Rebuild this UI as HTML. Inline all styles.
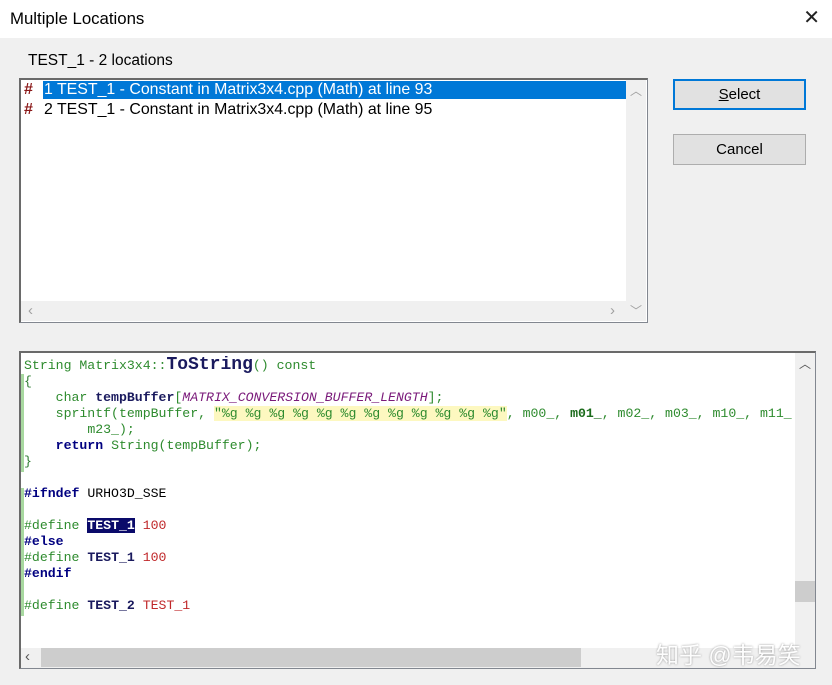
<!DOCTYPE html>
<html><head><meta charset="utf-8"><style>
*{margin:0;padding:0;box-sizing:border-box}
body{width:832px;height:685px;background:#f0f0f0;position:relative;overflow:hidden;font-family:"Liberation Sans","Noto Sans CJK SC",sans-serif;color:#000}
.abs{position:absolute}
.title{left:0;top:0;width:832px;height:38px;background:#fff;font-size:16.8px;line-height:38px;padding-left:10px}
.x{right:12px;top:8px;font-size:20px;line-height:20px;color:#222}
.btn{background:#e1e1e1;border:1px solid #adadad;font-size:15px;text-align:center;line-height:29px}
.mono{font-family:"Liberation Mono",monospace;font-size:13.2px;white-space:pre;line-height:16px}
.g{color:#2e8b2e}.b{color:#1a1a5e;font-weight:bold}.k{color:#000080;font-weight:bold}.p{color:#7a1a7a;font-style:italic}.r{color:#c0282a}.gr{color:#2e7d32}
</style></head><body>
<div class="abs title">Multiple Locations</div>
<div class="abs x">✕</div>
<div class="abs" style="left:28px;top:52px;font-size:15.5px">TEST_1 - 2 locations</div>

<div class="abs" style="left:19px;top:78px;width:629px;height:245px;background:#fff;border:1px solid #828790;border-top:2px solid #6a6a6a;border-left:2px solid #6a6a6a"></div>
<div class="abs" style="left:43px;top:81px;width:583px;height:18px;background:#0078d7"></div>
<div class="abs" style="left:24px;top:80px;font-size:16px;color:#8b1a1a;font-weight:bold;line-height:20px">#<br>#</div>
<div class="abs" style="left:44px;top:80px;font-size:15.9px;line-height:20px;color:#fff">1 TEST_1 - Constant in Matrix3x4.cpp (Math) at line 93</div>
<div class="abs" style="left:44px;top:100px;font-size:15.9px;line-height:20px">2 TEST_1 - Constant in Matrix3x4.cpp (Math) at line 95</div>
<div class="abs" style="left:626px;top:80px;width:20px;height:221px;background:#f0f0f0"></div>
<div class="abs" style="left:21px;top:301px;width:605px;height:20px;background:#f0f0f0"></div>
<div class="abs" style="left:626px;top:301px;width:20px;height:20px;background:#f0f0f0"></div>
<div class="abs" style="left:630px;top:82px;color:#a0a0a0;font-size:12px">︿</div>
<div class="abs" style="left:28px;top:302px;color:#a0a0a0;font-size:15px">‹</div>
<div class="abs" style="left:610px;top:302px;color:#a0a0a0;font-size:15px">›</div>
<div class="abs" style="left:630px;top:302px;color:#a0a0a0;font-size:12px">﹀</div>

<div class="abs btn" style="left:673px;top:79px;width:133px;height:31px;border:2px solid #0078d7;line-height:27px"><u>S</u>elect</div>
<div class="abs btn" style="left:673px;top:134px;width:133px;height:31px">Cancel</div>

<div class="abs" style="left:19px;top:351px;width:797px;height:318px;background:#fff;border:1px solid #828790;border-top:2px solid #6a6a6a;border-left:2px solid #6a6a6a"></div>
<div class="abs" style="left:21px;top:374px;width:3px;height:98px;background:#a8d8a0"></div>
<div class="abs" style="left:21px;top:488px;width:3px;height:128px;background:#a8d8a0"></div>
<div class="abs" style="left:795px;top:353px;width:20px;height:295px;background:#f0f0f0"></div>
<div class="abs" style="left:795px;top:581px;width:20px;height:21px;background:#cdcdcd"></div>
<div class="abs" style="left:799px;top:355px;color:#555;font-size:12px">︿</div>
<div class="abs" style="left:21px;top:648px;width:794px;height:20px;background:#f0f0f0"></div>
<div class="abs" style="left:41px;top:648px;width:540px;height:19px;background:#cdcdcd"></div>
<div class="abs" style="left:25px;top:648px;color:#555;font-size:15px">‹</div>
<div class="abs" style="left:656px;top:636px;color:#fff;font-size:23px;text-shadow:0 0 2px #888;opacity:.9">知乎 @韦易笑</div>

<div class="abs mono" style="left:24px;top:356px;width:770px;overflow:hidden"><div style="height:18px;line-height:19px"><span class="g">String Matrix3x4::</span><span class="b" style="font-size:18px">ToString</span><span class="g">() const</span></div><span class="gr">{</span>
    <span class="g">char</span> <span class="b">tempBuffer</span><span class="g">[</span><span class="p">MATRIX_CONVERSION_BUFFER_LENGTH</span><span class="g">];</span>
    <span class="g">sprintf(tempBuffer, </span><span style="background:#fdf8c0" class="g">"%g %g %g %g %g %g %g %g %g %g %g %g"</span><span class="g">, m00_, </span><span class="g" style="font-weight:bold;color:#1b6b1b">m01_</span><span class="g">, m02_, m03_, m10_, m11_</span>
        <span class="g">m23_);</span>
    <span class="k">return</span> <span class="g">String(tempBuffer);</span>
<span class="gr">}</span>

<span class="k">#ifndef</span> URHO3D_SSE

<span class="g">#define</span> <span style="background:#0a0a6a;color:#fff;font-weight:bold">TEST_1</span> <span class="r">100</span>
<span class="k">#else</span>
<span class="g">#define</span> <span class="b">TEST_1</span> <span class="r">100</span>
<span class="k">#endif</span>

<span class="g">#define</span> <span class="b">TEST_2</span> <span class="r">TEST_1</span></div>
</body></html>
